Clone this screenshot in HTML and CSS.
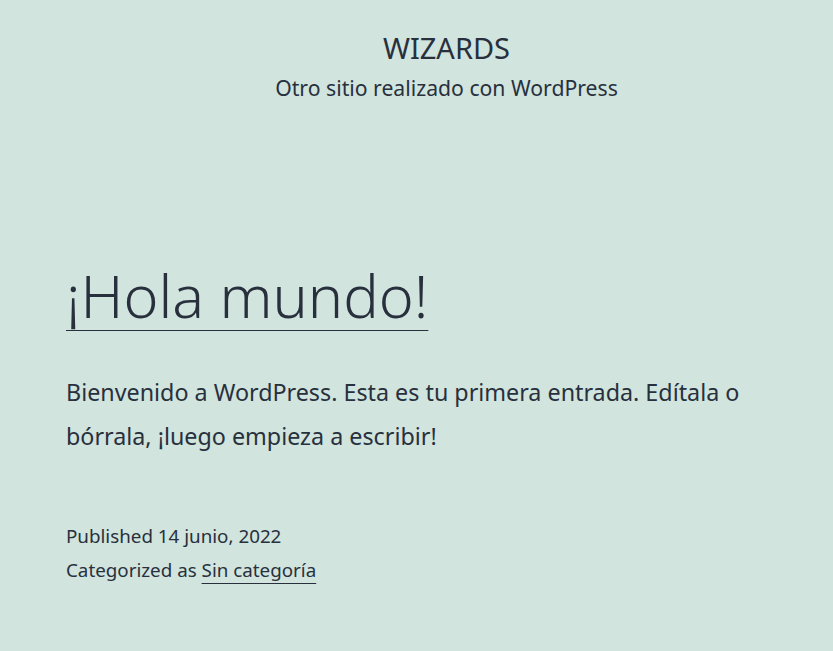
FILE: index.html
```html
<!DOCTYPE html>
<html lang="es">
<head>
<meta charset="utf-8">
<title>WIZARDS</title>
<link rel="stylesheet" href="styles.css">
</head>
<body>
<header class="site-header">
  <p class="site-title">WIZARDS</p>
  <p class="site-description">Otro sitio realizado con WordPress</p>
</header>
<main class="site-main">
  <article class="post">
    <h1 class="entry-title"><a href="#">¡Hola mundo!</a></h1>
    <div class="entry-content">
      <p>Bienvenido a WordPress. Esta es tu primera entrada. Edítala o bórrala, ¡luego empieza a escribir!</p>
    </div>
    <footer class="entry-footer">
      <div class="meta-line">Published 14 junio, 2022</div>
      <div class="meta-line">Categorized as <a href="#">Sin categoría</a></div>
    </footer>
  </article>
</main>
</body>
</html>
```

FILE: styles.css
```css
html, body {
  margin: 0;
  padding: 0;
}
body {
  background: #d1e4dd;
  color: #28303d;
  font-family: "Noto Sans", "Open Sans", sans-serif;
}
a {
  color: #28303d;
}
.site-header {
  display: flex;
  flex-direction: column;
  align-items: center;
  padding: 30px 0 0 60px;
}
.site-title {
  margin: 0;
  font-size: 29px;
  line-height: 36px;
  font-weight: 400;
}
.site-description {
  margin: 8px 0 0;
  font-size: 21.2px;
  line-height: 28px;
}
.site-main {
  padding: 0 66px;
}
.entry-title {
  margin: 157px 0 0;
  font-size: 59.3px;
  line-height: 72px;
  font-weight: 300;
}
.entry-title a {
  text-decoration: underline;
  text-decoration-thickness: 1px;
  text-underline-offset: 12px;
}
.entry-content p {
  margin: 39px 0 0;
  font-size: 23.3px;
  line-height: 44px;
}
.entry-footer {
  margin-top: 61px;
  font-size: 18.8px;
  line-height: 34px;
}
.entry-footer a {
  text-decoration-thickness: 1px;
  text-underline-offset: 6px;
}
```
